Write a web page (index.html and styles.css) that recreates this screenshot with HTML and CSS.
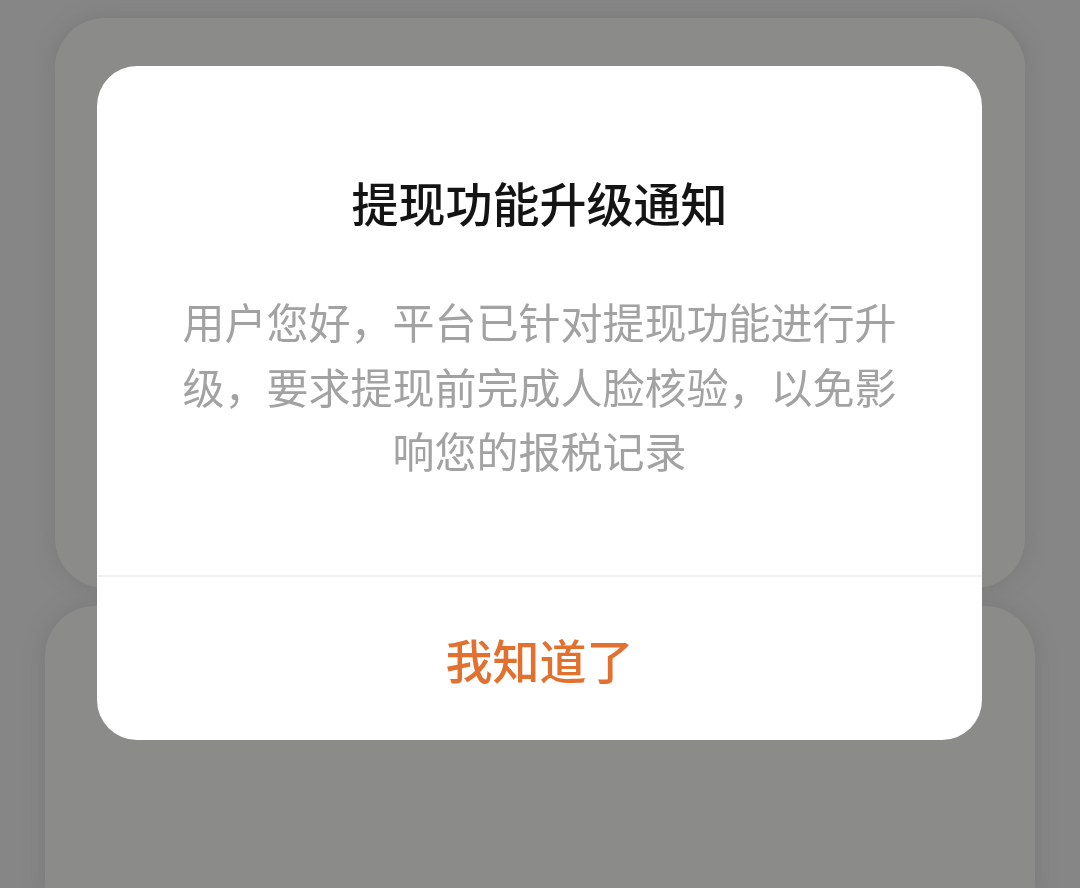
FILE: index.html
```html
<!DOCTYPE html>
<html lang="zh-CN">
<head>
  <meta charset="UTF-8">
  <meta name="viewport" content="width=device-width, initial-scale=1.0">
  <title>提现功能升级通知</title>
  <link rel="stylesheet" href="styles.css">
</head>
<body>

  <div class="backdrop">
    <div class="page-card top"></div>
    <div class="page-card bottom"></div>
  </div>

  <div class="overlay">
    <div class="dialog">
      <div class="dialog-body">
        <h2 class="dialog-title">提现功能升级通知</h2>
        <p class="dialog-text">用户您好，平台已针对提现功能进行升级，要求提现前完成人脸核验，以免影响您的报税记录</p>
      </div>
      <button class="dialog-btn">我知道了</button>
    </div>
  </div>

</body>
</html>
```

FILE: styles.css
```css
html, body {
  margin: 0;
  height: 100%;
}
body {
  background-color: #868686;
  font-family: "Noto Sans CJK SC", "Noto Sans", sans-serif;
  overflow: hidden;
}
.backdrop {
  display: flex;
  flex-direction: column;
  gap: 18px;
  padding: 18px 0 0;
  height: 100%;
  box-sizing: border-box;
}
.page-card {
  background-color: #8b8c8a;
  border-radius: 50px;
  box-shadow: 0 0 14px 6px rgba(120,122,120,0.6);
}
.page-card.top {
  margin: 0 55px;
  height: 570px;
}
.page-card.bottom {
  margin: 0 45px;
  flex: 1;
  border-radius: 50px 50px 0 0;
}
.overlay {
  position: fixed;
  inset: 0;
}
.dialog {
  position: absolute;
  left: 97px;
  top: 66px;
  width: 885px;
  height: 674px;
  background-color: #fff;
  border-radius: 40px;
  display: flex;
  flex-direction: column;
  overflow: hidden;
}
.dialog-body {
  padding: 104px 80px 0;
  height: 511px;
  box-sizing: border-box;
  border-bottom: 2px solid #f1f1f1;
  text-align: center;
}
.dialog-title {
  margin: 0;
  font-size: 47px;
  line-height: 64px;
  font-weight: 500;
  color: #141414;
}
.dialog-text {
  margin: 55px 0 0;
  font-size: 42px;
  line-height: 64.5px;
  color: #a2a2a2;
}
.dialog-btn {
  flex: 1;
  border: none;
  background: none;
  font-family: inherit;
  font-size: 47px;
  font-weight: 500;
  color: #e2702f;
  padding: 0;
  cursor: pointer;
}
```
